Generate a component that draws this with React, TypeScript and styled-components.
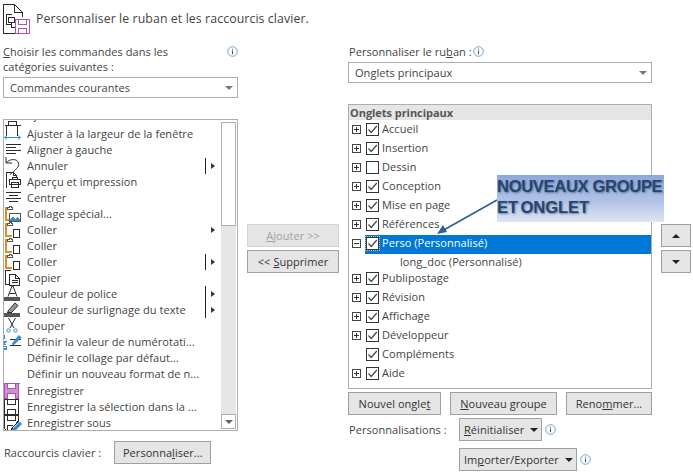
import React from "react";
import styled, { createGlobalStyle } from "styled-components";

const Global = createGlobalStyle`
  html, body { margin: 0; padding: 0; background: #fff; }
  body { font-family: "Open Sans", "Noto Sans", sans-serif; color: #444; }
`;

const Page = styled.div`
  width: 693px;
  height: 472px;
  overflow: hidden;
  position: relative;
  background: #fff;
  padding: 3px 2px 0 3px;
  box-sizing: border-box;
  font-size: 11px;
  letter-spacing: 0.05px;
`;
const Header = styled.div`
  display: flex;
  align-items: center;
  gap: 6px;
  height: 31px;
  font-size: 12.3px;
  letter-spacing: 0.1px;
`;
const Columns = styled.div`
  display: grid;
  grid-template-columns: 235px 92px 304px 30px;
  column-gap: 9px;
  margin-top: 7px;
`;
const Column = styled.div`
  display: flex;
  flex-direction: column;
  width: 100%;
`;
const LeftLabelRow = styled.div`
  display: flex;
  justify-content: space-between;
  height: 36px;
  line-height: 15px;
  padding-top: 3px;
  box-sizing: border-box;
  svg { margin-top: 2px; }
`;
const RightLabelRow = styled.div`
  display: flex;
  align-items: center;
  gap: 1px;
  height: 21px;
  padding-left: 1px;
`;
const U = styled.span`text-decoration: underline; text-underline-offset: 1px;`;
const Select = styled.div`
  display: flex;
  align-items: center;
  justify-content: space-between;
  height: 21px;
  border: 1px solid #adadad;
  box-sizing: border-box;
  padding: 0 4px 0 6px;
`;
const Caret = styled.span<{ $color?: string; $up?: boolean }>`
  width: 0;
  height: 0;
  border-left: 4px solid transparent;
  border-right: 4px solid transparent;
  ${(p) => (p.$up ? `border-bottom: 4px solid ${p.$color || "#222"};` : `border-top: 4px solid ${p.$color || "#222"};`)}
`;
const CommandBox = styled.div`
  margin-top: 21px;
  height: 312px;
  border: 1px solid #adadad;
  box-sizing: border-box;
  display: flex;
  overflow: hidden;
`;
const CommandList = styled.div`
  flex: 1;
  min-width: 0;
  overflow: hidden;
`;
const CommandRow = styled.div<{ $clipped?: boolean; $gapAbove?: boolean }>`
  display: flex;
  align-items: ${(p) => (p.$clipped ? "flex-start" : "center")};
  height: 16px;
  line-height: ${(p) => (p.$clipped ? "10px" : "16px")};
  ${(p) => p.$clipped && "margin-top: -10px;"}
  ${(p) => p.$gapAbove && "margin-top: 1px;"}
  white-space: nowrap;
`;
const IconCell = styled.span`
  width: 23px;
  height: 16px;
  flex: none;
  display: flex;
  justify-content: flex-start;
  svg { display: block; overflow: visible; margin-left: -1px; }
`;
const RowLabel = styled.span`flex: 1; min-width: 0;`;
const Sub = styled.span<{ $bar?: boolean }>`
  width: 15px;
  height: 16px;
  flex: none;
  box-sizing: border-box;
  display: flex;
  align-items: center;
  padding-left: 5px;
  margin-right: 1px;
  border-left: 1px solid ${(p) => (p.$bar ? "#222" : "transparent")};
`;
const SubArrow = styled.span`
  width: 0;
  height: 0;
  border-top: 3.5px solid transparent;
  border-bottom: 3.5px solid transparent;
  border-left: 4px solid #333;
`;
const Scrollbar = styled.div`
  width: 15px;
  margin: 2px 1px 1px 0;
  flex: none;
  background: #e6e6e6;
  display: flex;
  flex-direction: column;
`;
const Thumb = styled.div`
  height: 104px;
  background: #fff;
  border: 1px solid #adadad;
  box-sizing: border-box;
`;
const ScrollDown = styled.div`
  margin-top: auto;
  height: 15px;
  background: #fff;
  border: 1px solid #adadad;
  box-sizing: border-box;
  display: flex;
  align-items: center;
  justify-content: center;
`;
const ShortcutRow = styled.div`
  display: flex;
  align-items: center;
  margin-top: 10px;
  gap: 13px;
  padding-left: 1px;
`;
const Button = styled.div<{ $w?: number; $disabled?: boolean; $left?: boolean }>`
  height: 23px;
  box-sizing: border-box;
  width: ${(p) => (p.$w ? `${p.$w}px` : "auto")};
  background: #e5e5e5;
  border: 1px solid ${(p) => (p.$disabled ? "#d4d4d4" : "#a0a0a0")};
  color: ${(p) => (p.$disabled ? "#a3a3a3" : "#333")};
  display: flex;
  align-items: center;
  justify-content: ${(p) => (p.$left ? "flex-start" : "center")};
  gap: 6px;
  padding: ${(p) => (p.$left ? "0 0 0 4px" : "0")};
  white-space: nowrap;
`;
const SideStack = styled.div`
  display: flex;
  flex-direction: column;
  gap: 3px;
  padding-top: 183px;
`;
const TabBox = styled.div`
  margin-top: 21px;
  height: 285px;
  border: 1px solid #adadad;
  box-sizing: border-box;
  overflow: hidden;
`;
const TabHeader = styled.div`
  height: 15px;
  line-height: 15px;
  background: #e6e6e6;
  font-weight: 700;
  padding-left: 1px;
  font-size: 11px;
  letter-spacing: -0.05px;
  color: #555;
`;
const TabRow = styled.div<{ $selected?: boolean }>`
  display: flex;
  align-items: center;
  height: 19px;
  white-space: nowrap;
  padding-left: 3px;
  color: #444;
  ${(p) => p.$selected && "color: #fff;"}
`;
const SelectFill = styled.div<{ $selected?: boolean }>`
  display: flex;
  align-items: center;
  flex: 1;
  height: 19px;
  padding-left: 1px;
  margin-left: 4px;
  ${(p) =>
    p.$selected &&
    "background: linear-gradient(transparent 1px, #0078d7 1px); box-shadow: 0 1px 0 #0078d7;"}
`;
const TabText = styled.span`
  margin-bottom: 2px;
`;
const GroupRow = styled.div`
  height: 16px;
  line-height: 18px;
  padding-left: 51px;
`;
const Expander = styled.span`
  width: 9px;
  height: 9px;
  flex: none;
  border: 1px solid #444;
  box-sizing: border-box;
  position: relative;
  background: #fff;
`;
const ExpanderSpacer = styled.span`width: 9px; height: 9px; flex: none;`;
const Bar = styled.span<{ $vertical?: boolean }>`
  position: absolute;
  background: #333;
  ${(p) =>
    p.$vertical
      ? "left: 3px; top: 1px; width: 1px; height: 5px;"
      : "left: 1px; top: 3px; width: 5px; height: 1px;"}
`;
const CheckBox = styled.span<{ $focus?: boolean }>`
  width: 13px;
  height: 13px;
  flex: none;
  box-sizing: border-box;
  border: 1px solid #333;
  background: #fff;
  margin-right: 3px;
  display: flex;
  ${(p) => p.$focus && "outline: 1px dotted #e8c070; outline-offset: 0px;"}
  svg { display: block; }
`;
const ButtonRow = styled.div`
  display: flex;
  justify-content: space-between;
  margin-top: 3px;
`;
const CustomRow = styled.div`
  display: flex;
  align-items: center;
  margin-top: 3px;
  gap: 3px;
`;
const CustomLabel = styled.span`width: 108px; flex: none; padding-left: 1px; box-sizing: border-box;`;
const ImportRow = styled.div`
  display: flex;
  align-items: center;
  gap: 3px;
  margin-top: 7px;
  padding-left: 111px;
`;
const Callout = styled.div`
  position: absolute;
  left: 497px;
  top: 175px;
  width: 167px;
  height: 47px;
  box-sizing: border-box;
  background: linear-gradient(180deg, #8ea8dc 0%, #b0c2e6 55%, #dfe6f4 100%);
  font-family: "Liberation Sans", Arial, sans-serif;
  font-weight: 700;
  font-size: 16.6px;
  letter-spacing: -0.35px;
  line-height: 21px;
  padding-top: 1px;
  color: #25466f;
  text-shadow: 1px 1px 2px rgba(40, 60, 90, 0.55);
  white-space: nowrap;
`;
const CalloutTight = styled.span`
  letter-spacing: -0.1px;
  word-spacing: -2px;
`;
const ArrowOverlay = styled.svg`
  position: absolute;
  left: 430px;
  top: 195px;
  pointer-events: none;
`;

const Info = () => (
  <svg width="11" height="11" viewBox="0 0 12 12">
    <circle cx="6" cy="6" r="5.2" fill="#fff" stroke="#5b9bd5" />
    <rect x="5.4" y="5" width="1.2" height="4" fill="#555" />
    <rect x="5.4" y="3" width="1.2" height="1.1" fill="#555" />
  </svg>
);

const K = "#2b2b2b";
const O = "#e58a1f";
const B = "#2e8fd8";
const P = "#b04fb8";

const Svg: React.FC<{ children: React.ReactNode }> = ({ children }) => (
  <svg width="18" height="16" viewBox="0 0 18 16" fill="none" stroke={K} strokeWidth="1" shapeRendering="crispEdges">
    {children}
  </svg>
);
const PasteIcon = (
  <Svg>
    <path d="M10 2H3V14H9" stroke={O} strokeWidth="2" />
    <path d="M4.5 3.5V1.5H6V0.5H8V1.5H9.5V3.5H4.5" stroke="#555" fill="#fff" />
    <rect x="10.5" y="7.5" width="6" height="8" />
  </Svg>
);
const icons: Record<string, React.ReactNode> = {
  ajouter: (
    <Svg>
      <path d="M1.5 15.5H17.5M3.5 15.5V25.5M14.5 15.5V25.5M5.5 15.5V11.5H13.5V15.5" />
    </Svg>
  ),
  ajuster: (
    <Svg>
      <path d="M1.5 11.5H17.5M1.5 11.5L4 9.5M1.5 11.5L4 13.5M17.5 11.5L15 9.5M17.5 11.5L15 13.5" stroke={B} shapeRendering="auto" />
    </Svg>
  ),
  aligner: (
    <Svg>
      <path d="M2.5 2.5H17.5M2.5 5.5H12.5M2.5 8.5H17.5M2.5 11.5H12.5" />
    </Svg>
  ),
  annuler: (
    <svg width="18" height="16" viewBox="0 0 18 16" fill="none" stroke={K}>
      <path d="M3 -1V5H9" />
      <path d="M3.5 4.5C7 .5 14.5 .5 15.5 5C16.5 9 12 12.5 7 16.5" />
    </svg>
  ),
  apercu: (
    <Svg>
      <path d="M3.5 13.5V-1.5H10.5L13.5 1.5V4M10.5 -1.5V1.5H13.5" />
      <path d="M9.5 5.5V3.5H14.5V5.5M6.5 5.5H17.5V10.5H6.5ZM8.5 8.5H15.5V13.5H8.5Z" fill="#fff" />
    </Svg>
  ),
  centrer: (
    <Svg>
      <path d="M2.5 2.5H17.5M5.5 5.5H14.5M2.5 8.5H17.5M5.5 11.5H14.5" />
    </Svg>
  ),
  collage: (
    <Svg>
      <path d="M10 2H3V14H6" stroke={O} strokeWidth="2" />
      <path d="M4.5 3.5V1.5H6V0.5H8V1.5H9.5V3.5H4.5" stroke="#555" fill="#fff" />
      <rect x="6.5" y="7.5" width="11" height="8" stroke="#555" fill="#fff" />
      <path d="M7 14L10 10L12 13L14 11L17 14V15H7Z" fill={B} stroke="none" />
    </Svg>
  ),
  coller: PasteIcon,
  copier: (
    <Svg>
      <path d="M7.5 .5H2.5V14.5H6.5" />
      <path d="M6.5 4.5H12.5L16.5 8.5V15.5H6.5ZM12.5 4.5V8.5H16.5M8.5 10.5H14.5M8.5 12.5H14.5" />
    </Svg>
  ),
  police: (
    <Svg>
      <path d="M5 10.5L9 0H10L14 10.5M6.5 7.5H12.5" shapeRendering="auto" />
      <rect x="1" y="11" width="16" height="4" fill="#555" stroke="none" />
    </Svg>
  ),
  surlignage: (
    <Svg>
      <path d="M5 9L12 1L15 3.5L8.5 10.5H5Z" fill="#999" shapeRendering="auto" />
      <path d="M4 10.5H9" />
      <rect x="1" y="11" width="16" height="4" fill="#555" stroke="none" />
    </Svg>
  ),
  couper: (
    <Svg>
      <path d="M5.5 0L11 10M12.5 0L7 10" shapeRendering="auto" />
      <circle cx="5.5" cy="12.5" r="1.7" stroke={B} shapeRendering="auto" />
      <circle cx="12.5" cy="12.5" r="1.7" stroke={B} shapeRendering="auto" />
    </Svg>
  ),
  numerotation: (
    <Svg>
      <path d="M1.5 1V5M.5 7.5H3L.5 10.5H3M.5 12.5H3V15.5H.5M3 14H1" stroke={B} />
      <path d="M6.5 5.5H17.5M6.5 11.5H17.5" />
      <path d="M9 10L16 1.5L18 3.5L11 10.5Z" fill={B} stroke={B} shapeRendering="auto" />
    </Svg>
  ),
  save: (
    <svg width="18" height="16" viewBox="0 0 18 16" fill="#cf8fd5" stroke={P} shapeRendering="crispEdges">
      <path d="M1.5 .5H15.5V15.5H1.5Z" />
      <path d="M4.5 .5V5.5H12.5V.5M4.5 15.5V10.5H12.5V15.5" fill="#fff" />
      <rect x="15" y="0" width="2" height="1" fill={B} stroke="none" />
    </svg>
  ),
  saveSel: (
    <Svg>
      <path d="M1.5 .5H15.5V15.5H1.5Z" />
      <path d="M4.5 .5V5.5H12.5V.5M4.5 15.5V10.5H12.5V15.5" />
    </Svg>
  ),
  saveAs: (
    <Svg>
      <path d="M1.5 .5H15.5V6L8 14.5V15.5H3.5L1.5 13.5Z" />
      <path d="M4.5 .5V5.5H12.5V.5M4.5 15.5V10.5H10" />
      <path d="M9 15L16.5 7L18.5 9L11 16.5H9Z" fill={B} stroke={B} shapeRendering="auto" />
    </Svg>
  ),
};

type Cmd = { icon?: string; text: string; sub?: "bar" | "plain"; gap?: boolean };
const commands: Cmd[] = [
  { icon: "ajouter", text: "Ajouter un tableau" },
  { icon: "ajuster", text: "Ajuster à la largeur de la fenêtre" },
  { icon: "aligner", text: "Aligner à gauche" },
  { icon: "annuler", text: "Annuler", sub: "bar" },
  { icon: "apercu", text: "Aperçu et impression" },
  { icon: "centrer", text: "Centrer" },
  { icon: "collage", text: "Collage spécial..." },
  { icon: "coller", text: "Coller", sub: "plain" },
  { icon: "coller", text: "Coller" },
  { icon: "coller", text: "Coller", sub: "bar" },
  { icon: "copier", text: "Copier" },
  { icon: "police", text: "Couleur de police", sub: "bar" },
  { icon: "surlignage", text: "Couleur de surlignage du texte", sub: "bar" },
  { icon: "couper", text: "Couper" },
  { icon: "numerotation", text: "Définir la valeur de numérotati..." },
  { text: "Définir le collage par défaut..." },
  { text: "Définir un nouveau format de n..." },
  { icon: "save", text: "Enregistrer", gap: true },
  { icon: "saveSel", text: "Enregistrer la sélection dans la ..." },
  { icon: "saveAs", text: "Enregistrer sous" },
];

type Tab = { text: string; checked?: boolean; noExpand?: boolean };
const before: Tab[] = [
  { text: "Accueil", checked: true },
  { text: "Insertion", checked: true },
  { text: "Dessin" },
  { text: "Conception", checked: true },
  { text: "Mise en page", checked: true },
  { text: "Références", checked: true },
];
const after: Tab[] = [
  { text: "Publipostage", checked: true },
  { text: "Révision", checked: true },
  { text: "Affichage", checked: true },
  { text: "Développeur", checked: true },
  { text: "Compléments", checked: true, noExpand: true },
  { text: "Aide", checked: true },
];

const Check = () => (
  <svg width="11" height="11" viewBox="0 0 11 11" fill="none" stroke="#444" strokeWidth="1.2">
    <path d="M1.5 5.5L4.2 8.5L9.8 2" />
  </svg>
);

const TabLine: React.FC<{ tab: Tab; selected?: boolean; minus?: boolean }> = ({ tab, selected, minus }) => (
  <TabRow $selected={selected}>
    {tab.noExpand ? (
      <ExpanderSpacer />
    ) : (
      <Expander>
        <Bar />
        {!minus && <Bar $vertical />}
      </Expander>
    )}
    <SelectFill $selected={selected}>
      <CheckBox $focus={selected}>{tab.checked && <Check />}</CheckBox>
      <TabText>{tab.text}</TabText>
    </SelectFill>
  </TabRow>
);

export default function App() {
  return (
    <Page>
      <Global />
      <Header>
        <svg width="27" height="30" viewBox="0 0 27 30" fill="none" stroke={K} shapeRendering="crispEdges">
          <path d="M13 29.5H.5V.5H11.5L19.5 8.5V13M11.5 .5V8.5H19.5" />
          <path d="M8.5 10.5H3.5V20.5H8.5M5.5 13.5H11.5V18.5H5.5ZM8.5 18.5V23.5H12" />
          <rect x="12.5" y="15.5" width="14" height="14" stroke={P} fill="#fff" />
          <path d="M15.5 15.5V20.5H23.5V15.5M15.5 29.5V24.5H23.5V29.5" stroke={P} />
        </svg>
        Personnaliser le ruban et les raccourcis clavier.
      </Header>
      <Columns>
        <Column>
          <LeftLabelRow>
            <span>
              <U>C</U>hoisir les commandes dans les
              <br />
              catégories suivantes :
            </span>
            <Info />
          </LeftLabelRow>
          <Select>
            Commandes courantes
            <Caret $color="#777" />
          </Select>
          <CommandBox>
            <CommandList>
              {commands.map((c, i) => (
                <CommandRow key={i} $clipped={i === 0} $gapAbove={c.gap}>
                  <IconCell>{c.icon && icons[c.icon]}</IconCell>
                  <RowLabel>{c.text}</RowLabel>
                  {c.sub && (
                    <Sub $bar={c.sub === "bar"}>
                      <SubArrow />
                    </Sub>
                  )}
                </CommandRow>
              ))}
            </CommandList>
            <Scrollbar>
              <Thumb />
              <ScrollDown>
                <Caret $color="#666" />
              </ScrollDown>
            </Scrollbar>
          </CommandBox>
          <ShortcutRow>
            Raccourcis clavier :
            <Button $w={97}>
              <span>
                Personna<U>l</U>iser...
              </span>
            </Button>
          </ShortcutRow>
        </Column>
        <SideStack>
          <Button $disabled>
            <span>
              <U>A</U>jouter &gt;&gt;
            </span>
          </Button>
          <Button>
            <span>
              &lt;&lt; <U>S</U>upprimer
            </span>
          </Button>
        </SideStack>
        <Column>
          <RightLabelRow>
            <span>
              Personnaliser le ru<U>b</U>an :
            </span>
            <Info />
          </RightLabelRow>
          <Select>
            Onglets principaux
            <Caret $color="#777" />
          </Select>
          <TabBox>
            <TabHeader>Onglets principaux</TabHeader>
            {before.map((t) => (
              <TabLine key={t.text} tab={t} />
            ))}
            <TabLine tab={{ text: "Perso (Personnalisé)", checked: true }} selected minus />
            <GroupRow>long_doc (Personnalisé)</GroupRow>
            {after.map((t) => (
              <TabLine key={t.text} tab={t} />
            ))}
          </TabBox>
          <ButtonRow>
            <Button $w={93}>
              <span>
                Nouvel ongle<U>t</U>
              </span>
            </Button>
            <Button $w={107}>
              <span>
                <U>N</U>ouveau groupe
              </span>
            </Button>
            <Button $w={86}>
              <span>
                Reno<U>m</U>mer...
              </span>
            </Button>
          </ButtonRow>
          <CustomRow>
            <CustomLabel>Personnalisations :</CustomLabel>
            <Button $w={83} $left>
              <span>
                <U>R</U>éinitialiser
              </span>
              <Caret />
            </Button>
            <Info />
          </CustomRow>
          <ImportRow>
            <Button $w={118} $left>
              <span>
                Im<U>p</U>orter/Exporter
              </span>
              <Caret />
            </Button>
            <Info />
          </ImportRow>
        </Column>
        <SideStack>
          <Button>
            <Caret $up />
          </Button>
          <Button>
            <Caret />
          </Button>
        </SideStack>
      </Columns>
      <Callout>
        NOUVEAUX GROUPE
        <br />
        <CalloutTight>ET ONGLET</CalloutTight>
      </Callout>
      <ArrowOverlay width="70" height="45" viewBox="0 0 70 45">
        <path d="M67 5L12 36" stroke="#2f5f97" strokeWidth="1.6" fill="none" />
        <path d="M7 39L17 37L13 30Z" fill="#2f5f97" />
      </ArrowOverlay>
    </Page>
  );
}
